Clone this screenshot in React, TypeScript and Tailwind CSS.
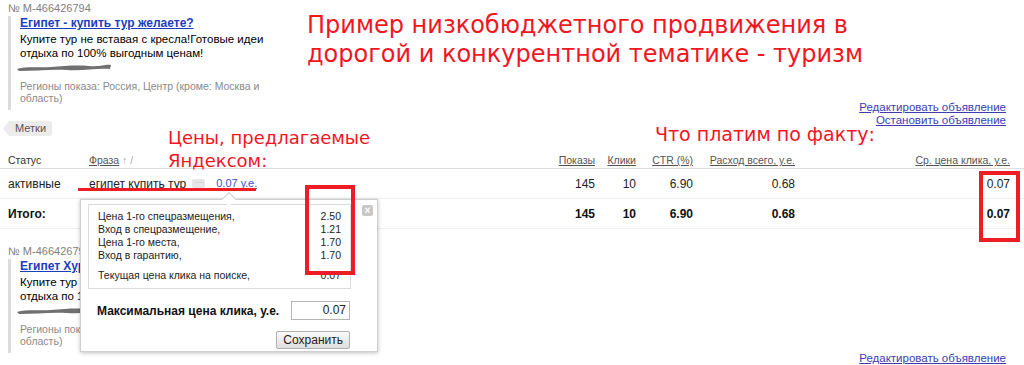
import React from "react";

const red = "text-[#f2161f]";

const Scribble = () => (
  <svg width="94" height="9" viewBox="0 0 94 9" className="block blur-[0.5px] -ml-[3px]">
    <path
      d="M0 6 C 10 3, 22 5, 34 4 S 60 2, 72 3 S 88 1, 94 2 L 93 6 C 80 5, 66 8, 50 7 S 18 8, 2 8 Z"
      fill="#707070"
    />
  </svg>
);

const AdBlock = ({ id, title }: { id: string; title: string }) => (
  <div className="w-[300px] pl-2">
    <div className="text-[11px] leading-[13px] text-[#808080]">№ {id}</div>
    <div className="mt-[1px] border-l-[3px] border-[#dcdcdc] pl-[9px] pb-[6px] whitespace-nowrap">
      <div className="text-[12px] leading-[15px] font-bold text-[#1c3dbd]">
        <a className="underline">{title}</a>
      </div>
      <div className="text-[11.5px] leading-[14px] text-black mt-[1px]">
        Купите тур не вставая с кресла!Готовые идеи
        <br />
        отдыха по 100% выгодным ценам!
      </div>
      <div className="mt-[3px]">
        <Scribble />
      </div>
      <div className="mt-[8px] text-[10.5px] leading-[12px] text-[#8a8a8a]">
        Регионы показа: Россия, Центр (кроме: Москва и
        <br />
        область)
      </div>
    </div>
  </div>
);

const AdLinks = () => (
  <div className="flex flex-col items-end pr-[18px] text-[11.5px] leading-[13px] text-[#3c3cb4]">
    <a className="underline">Редактировать объявление</a>
    <a className="underline">Остановить объявление</a>
  </div>
);

const cols = "grid grid-cols-[81px_450px_56px_41px_57px_102px_215px] pl-2";

export default function App() {
  return (
    <div className="relative w-[1024px] h-[365px] overflow-hidden bg-white font-['Liberation_Sans',Arial,sans-serif]">
      {/* top ad + heading */}
      <div className="flex pt-[2px]">
        <AdBlock id="M-466426794" title="Египет - купить тур желаете?" />
        <div
          className={`ml-[7px] mt-[9px] text-[24px] leading-[29px] ${red} font-['DejaVu_Sans',sans-serif]`}
        >
          Пример низкобюджетного продвижения в
          <br />
          дорогой и конкурентной тематике - туризм
        </div>
      </div>
      <div className="-mt-[9px]">
        <AdLinks />
      </div>

      {/* labels */}
      <div className="-mt-[6px] pl-[3px] h-[15px] flex">
        <span className="inline-flex items-center h-[15px] pl-[12px] pr-[6px] bg-[#ececec] rounded-r-[3px] [clip-path:polygon(6px_0,100%_0,100%_100%,6px_100%,0_50%)] text-[11px] text-[#555]">
          Метки
        </span>
      </div>

      {/* table */}
      <div className="mt-[17px] text-[10.5px] text-[#555]">
        <div className={`${cols} h-[16px] items-center border-b border-[#dedede]`}>
          <div className="text-[#333]">Статус</div>
          <div>
            <span className="underline">Фраза</span>
            <span className="text-[#aaa]"> ↑ /</span>
          </div>
          <div className="text-right underline">Показы</div>
          <div className="text-right underline">Клики</div>
          <div className="text-right underline">CTR (%)</div>
          <div className="text-right underline">Расход всего, у.е.</div>
          <div className="text-right underline">Ср. цена клика, у.е.</div>
        </div>
        <div className={`${cols} h-[30px] items-center border-b border-[#eeeeee] text-[12px] text-[#222]`}>
          <div>активные</div>
          <div className="flex items-center">
            <span>египет купить тур</span>
            <span className="ml-[6px] h-[9px] w-[13px] rounded-[2px] bg-[#e6e6e6] text-[8px] leading-[8px] text-[#999] text-center">···</span>
            <span className="ml-[11px] text-[11px] text-[#3a50c8] underline decoration-dotted">0.07 у.е.</span>
          </div>
          <div className="text-right">145</div>
          <div className="text-right">10</div>
          <div className="text-right">6.90</div>
          <div className="text-right">0.68</div>
          <div className="text-right">0.07</div>
        </div>
        <div className={`${cols} h-[30px] items-center border-b border-[#eeeeee] text-[12px] font-bold text-[#111]`}>
          <div>Итого:</div>
          <div />
          <div className="text-right">145</div>
          <div className="text-right">10</div>
          <div className="text-right">6.90</div>
          <div className="text-right">0.68</div>
          <div className="text-right">0.07</div>
        </div>
      </div>

      {/* second ad */}
      <div className="mt-[16px]">
        <AdBlock id="M-466426796" title="Египет Хургада - туры" />
      </div>
      <div className="-mt-[1px]">
        <AdLinks />
      </div>

      {/* annotations */}
      <div
        className={`absolute left-[168px] top-[126px] text-[18px] leading-[23px] ${red} font-['DejaVu_Sans',sans-serif]`}
      >
        Цены, предлагаемые
        <br />
        Яндексом:
      </div>
      <div
        className={`absolute left-[655px] top-[123px] text-[19px] leading-[23px] ${red} font-['DejaVu_Sans',sans-serif]`}
      >
        Что платим по факту:
      </div>
      <div className="absolute left-[78px] top-[188px] w-[178px] h-[3px] bg-[#ee1c24]" />

      {/* price popup */}
      <div className="absolute left-[80px] top-[199px] w-[298px] h-[153px] bg-white border border-[#cfcfcf] shadow-[0_1px_4px_rgba(0,0,0,0.25)] text-[#222]">
        <div className="absolute -top-[6px] left-[143px] w-[10px] h-[10px] bg-white border-l border-t border-[#cfcfcf] rotate-45" />
        <div className="absolute right-[4px] top-[5px] w-[11px] h-[11px] rounded-[2px] bg-[#c8c8c8] text-white text-[10px] leading-[11px] text-center font-bold">
          ×
        </div>
        <div className="ml-[7px] mt-[4px] w-[263px] h-[85px] border border-[#dcdcdc] px-[9px] pt-[5px] text-[10.5px] leading-[13px]">
          {[
            ["Цена 1-го спецразмещения,", "2.50"],
            ["Вход в спецразмещение,", "1.21"],
            ["Цена 1-го места,", "1.70"],
            ["Вход в гарантию,", "1.70"],
          ].map(([l, v]) => (
            <div key={l} className="flex justify-between">
              <span>{l}</span>
              <span>{v}</span>
            </div>
          ))}
          <div className="flex justify-between mt-[7px]">
            <span>Текущая цена клика на поиске,</span>
            <span>0.07</span>
          </div>
        </div>
        <div className="flex items-center justify-between ml-[16px] mr-[27px] mt-[12px]">
          <span className="text-[12px] font-bold text-[#111]">Максимальная цена клика, у.е.</span>
          <div className="w-[59px] h-[19px] border border-[#b5b5b5] text-right pr-[3px] text-[12px] leading-[17px]">
            0.07
          </div>
        </div>
        <div className="flex justify-end mr-[27px] mt-[11px]">
          <button className="h-[18px] px-[6px] border border-[#b0b0b0] rounded-[2px] bg-gradient-to-b from-[#fafafa] to-[#dedede] text-[12px] leading-[16px] text-[#222]">
            Сохранить
          </button>
        </div>
      </div>

      {/* highlight boxes */}
      <div className="absolute left-[305px] top-[185px] w-[50px] h-[90px] border-4 border-[#ee1c24]" />
      <div className="absolute left-[979px] top-[171px] w-[41px] h-[71px] border-4 border-[#ee1c24]" />
    </div>
  );
}
